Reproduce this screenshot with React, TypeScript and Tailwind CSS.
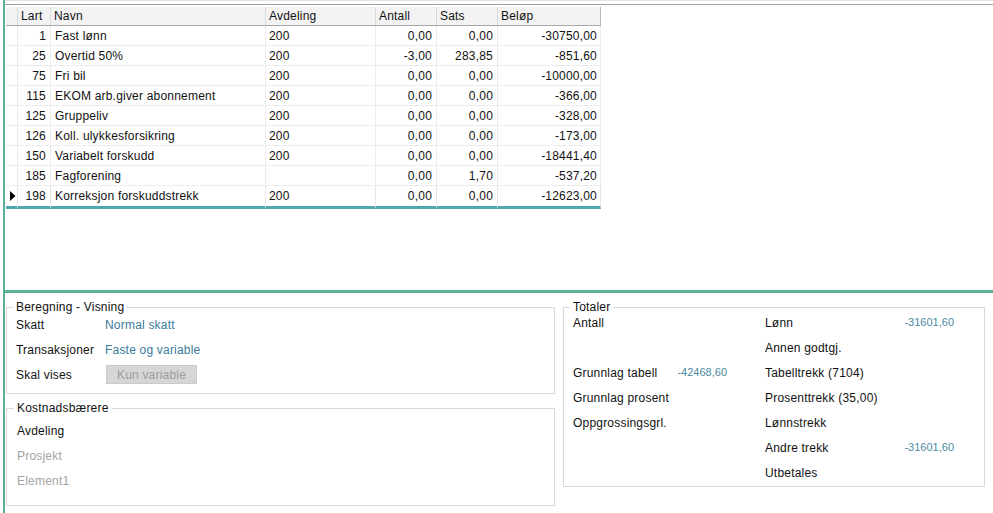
import React from "react";

type Row = {
    lart: number;
    navn: string;
    avdeling: string;
    antall: string;
    sats: string;
    belop: string;
};

const rows: Row[] = [
    { lart: 1, navn: "Fast lønn", avdeling: "200", antall: "0,00", sats: "0,00", belop: "-30750,00" },
    { lart: 25, navn: "Overtid 50%", avdeling: "200", antall: "-3,00", sats: "283,85", belop: "-851,60" },
    { lart: 75, navn: "Fri bil", avdeling: "200", antall: "0,00", sats: "0,00", belop: "-10000,00" },
    { lart: 115, navn: "EKOM arb.giver abonnement", avdeling: "200", antall: "0,00", sats: "0,00", belop: "-366,00" },
    { lart: 125, navn: "Gruppeliv", avdeling: "200", antall: "0,00", sats: "0,00", belop: "-328,00" },
    { lart: 126, navn: "Koll. ulykkesforsikring", avdeling: "200", antall: "0,00", sats: "0,00", belop: "-173,00" },
    { lart: 150, navn: "Variabelt forskudd", avdeling: "200", antall: "0,00", sats: "0,00", belop: "-18441,40" },
    { lart: 185, navn: "Fagforening", avdeling: "", antall: "0,00", sats: "1,70", belop: "-537,20" },
    { lart: 198, navn: "Korreksjon forskuddstrekk", avdeling: "200", antall: "0,00", sats: "0,00", belop: "-12623,00" },
];

const cols = "grid grid-cols-[12px_33px_215px_110px_61px_61px_103px]";

const Grid = () => {
    return (
        <div className="ml-px w-[595px]">
            <div className={`${cols} h-[19px] bg-[#f3f3f3] border-b border-[#a8a8a8] leading-[18px]`}>
                <div className="border-r border-[#d9d9d9]" />
                <div className="border-r border-[#d9d9d9] pl-[3px]">Lart</div>
                <div className="border-r border-[#d9d9d9] pl-[3px]">Navn</div>
                <div className="border-r border-[#d9d9d9] pl-[3px]">Avdeling</div>
                <div className="border-r border-[#d9d9d9] pl-[3px]">Antall</div>
                <div className="border-r border-[#d9d9d9] pl-[3px]">Sats</div>
                <div className="border-r border-[#b8b8b8] pl-[3px]">Beløp</div>
            </div>
            {rows.map((r, i) => {
                const last = i === rows.length - 1;
                const cell = last
                    ? "h-[23px] border-r border-r-[#e6e6e6] border-b-[3px] border-b-[#4fa6b1] leading-[20px]"
                    : "h-[20px] border-r border-b border-[#ececec] leading-[20px]";
                return (
                    <div key={r.lart} className={cols}>
                        <div className={`${cell} flex items-start`}>
                            {last && (
                                <svg width="6" height="10" viewBox="0 0 6 10" className="mt-[5px] ml-[4px]">
                                    <path d="M0 0 L5.5 5 L0 10 Z" fill="#000" />
                                </svg>
                            )}
                        </div>
                        <div className={`${cell} text-right pr-[4px]`}>{r.lart}</div>
                        <div className={`${cell} pl-[4px]`}>{r.navn}</div>
                        <div className={`${cell} pl-[3px]`}>{r.avdeling}</div>
                        <div className={`${cell} text-right pr-[4px]`}>{r.antall}</div>
                        <div className={`${cell} text-right pr-[4px]`}>{r.sats}</div>
                        <div className={`${cell} text-right pr-[3px]`}>{r.belop}</div>
                    </div>
                );
            })}
        </div>
    );
};

const Legend = ({ children }: { children: React.ReactNode }) => (
    <legend className="ml-[-3px] px-[3px] leading-[14px]">{children}</legend>
);

const Value = ({ children }: { children: React.ReactNode }) => (
    <span className="text-[11px] tracking-normal text-[#4b89a3]">{children}</span>
);

const totals: [string, string, string, string][] = [
    ["Antall", "", "Lønn", "-31601,60"],
    ["", "", "Annen godtgj.", ""],
    ["Grunnlag tabell", "-42468,60", "Tabelltrekk (7104)", ""],
    ["Grunnlag prosent", "", "Prosenttrekk (35,00)", ""],
    ["Oppgrossingsgrl.", "", "Lønnstrekk", ""],
    ["", "", "Andre trekk", "-31601,60"],
    ["", "", "Utbetales", ""],
];

export default function App() {
    return (
        <div className="flex h-[513px] w-[993px] overflow-hidden bg-white text-[12px] tracking-[0.2px] text-[#111] font-['Liberation_Sans',Arial,sans-serif]">
            <div className="w-[3px] shrink-0" />
            <div className="flex flex-1 flex-col border-l-2 border-[#5bae98]">
                <div className="h-[293px] shrink-0 border-t border-[#e4e4e4] border-b-[3px] border-b-[#5bae98]">
                    <div className="mt-[3px] border-t border-[#a4a4a4] pt-[2px]">
                        <Grid />
                    </div>
                </div>

                <div className="flex gap-[8px] pl-px">
                    <div className="flex w-[549px] flex-col">
                        <fieldset className="mt-[7px] h-[94px] border border-[#d9d9d9] px-[9px]">
                            <Legend>Beregning - Visning</Legend>
                            <div className="-mt-[2px] grid grid-cols-[89px_1fr] auto-rows-[25px] items-center">
                                <span>Skatt</span>
                                <span className="text-[#3a7b9c]">Normal skatt</span>
                                <span>Transaksjoner</span>
                                <span className="text-[#3a7b9c]">Faste og variable</span>
                                <span>Skal vises</span>
                                <div>
                                    <button className="ml-px h-[19px] w-[91px] border border-[#cbcbcb] bg-[#d6d6d6] text-[#9d9d9d]">
                                        Kun variable
                                    </button>
                                </div>
                            </div>
                        </fieldset>
                        <fieldset className="mt-[7px] h-[105px] border border-[#d9d9d9] px-[10px]">
                            <Legend>Kostnadsbærere</Legend>
                            <div className="mt-[4px] flex flex-col">
                                <span className="leading-[25px]">Avdeling</span>
                                <span className="leading-[25px] text-[#a3a3a3]">Prosjekt</span>
                                <span className="leading-[25px] text-[#a3a3a3]">Element1</span>
                            </div>
                        </fieldset>
                    </div>

                    <fieldset className="mt-[7px] h-[187px] w-[422px] border border-[#d9d9d9] px-[9px]">
                        <Legend>Totaler</Legend>
                        <div className="-mt-[4px] flex flex-col">
                            {totals.map(([a, av, b, bv], i) => (
                                <div key={i} className="flex h-[25px] items-center">
                                    <div className="flex w-[154px] items-center justify-between">
                                        <span>{a}</span>
                                        <Value>{av}</Value>
                                    </div>
                                    <div className="ml-[38px] flex w-[189px] items-center justify-between">
                                        <span>{b}</span>
                                        <Value>{bv}</Value>
                                    </div>
                                </div>
                            ))}
                        </div>
                    </fieldset>
                </div>
            </div>
        </div>
    );
}
